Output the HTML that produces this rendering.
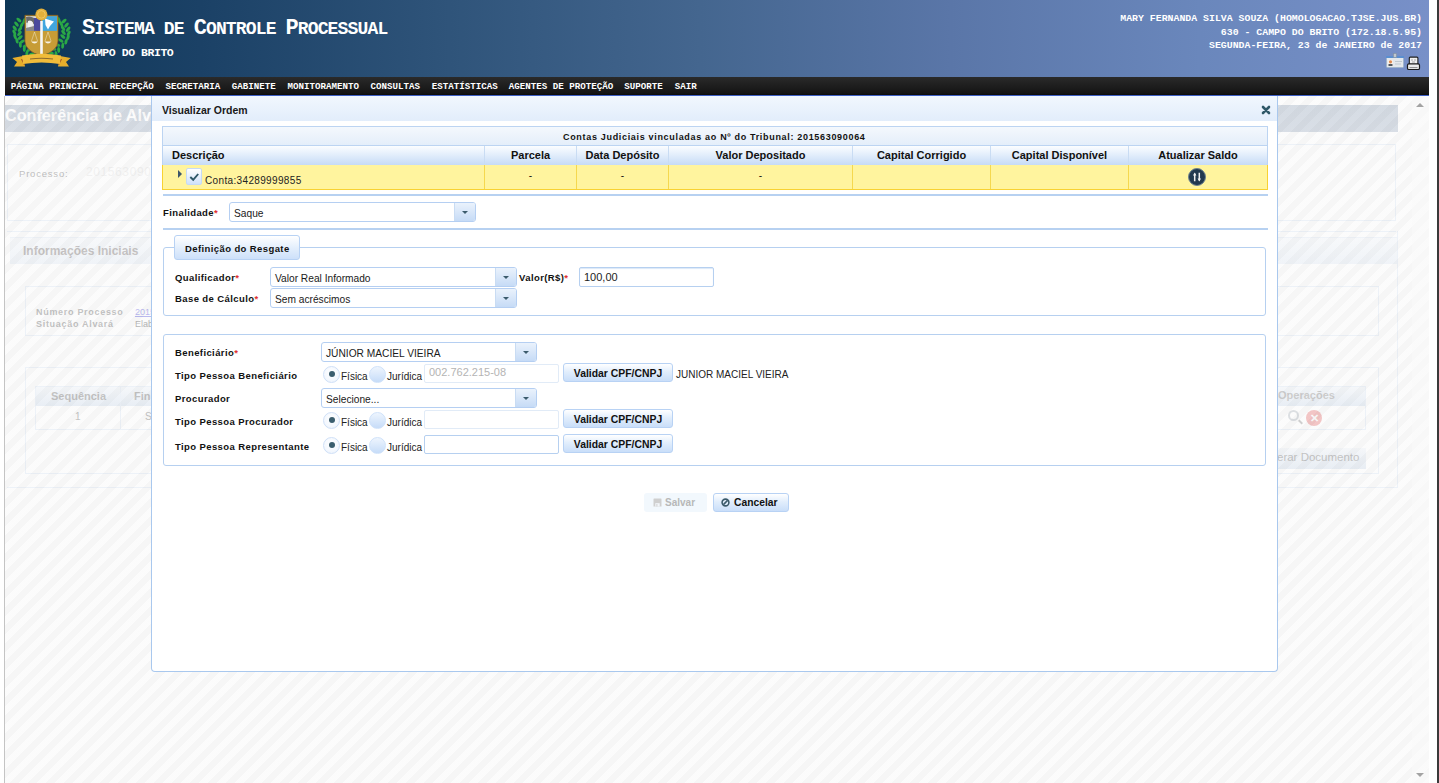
<!DOCTYPE html>
<html><head><meta charset="utf-8">
<style>
*{box-sizing:border-box;margin:0;padding:0}
html,body{width:1439px;height:783px;overflow:hidden;background:#fff;font-family:"Liberation Sans",sans-serif;color:#111}
.a{position:absolute;white-space:pre}
.mono{font-family:"Liberation Mono",monospace;font-weight:bold;color:#fff}
#header{left:5px;top:0;width:1424px;height:77px;background:linear-gradient(90deg,#0d3656 0%,#1b4166 13.7%,#2f547a 31.2%,#44668f 48.8%,#5a76a8 66.4%,#6a87bc 83.9%,#7890c8 100%)}
#nav{left:5px;top:77px;width:1424px;height:19px;background:linear-gradient(#2a2a2a,#141414 90%,#0a0a0a);border-bottom:1px solid #3d5fc4}
#title{left:82px;top:16px;font-size:18px;letter-spacing:-0.85px}
#title b{font-size:22px;letter-spacing:-1px}
#sub{left:83px;top:46px;font-size:11.5px;letter-spacing:-0.45px}
.nv{top:81px;font-size:9.17px}
#userinfo{right:17px;top:12px;font-size:9.87px;text-align:right;line-height:13.6px}
#rborder{left:1437px;top:0;width:2px;height:783px;background:#3a3a3a}
/* background page */
.bgt{color:#bcbcbc}
#overlay{left:5px;top:96px;width:1424px;height:687px;background:repeating-linear-gradient(135deg,rgba(249,249,249,0.6) 0 5.3px,rgba(240,240,240,0.6) 5.3px 12.0px,rgba(249,249,249,0.6) 12.0px 12.7279px)}
/* modal */
#modal{left:151px;top:96px;width:1127px;height:576px;background:#fff;border:1px solid #a9c8ee;border-top:none;border-radius:0 0 4px 4px}
#mtitle{left:0;top:0;width:1125px;height:25px;background:linear-gradient(#f1f7fe,#e2edfb)}
.lbl{font-size:9.5px;font-weight:bold;letter-spacing:0.4px;color:#111}
.req{color:#e03030;font-weight:bold;letter-spacing:0}
.sel{background:#fff;border:1px solid #b5cff2;border-radius:3px;height:20px;font-size:10px;color:#1a1a1a}
.sel span{position:absolute;left:4px;top:5px;font-size:10.2px}
.sel i{position:absolute;right:0;top:0;width:21px;height:18px;border-left:1px solid #c9dcf3;background:linear-gradient(#eaf2fc,#c6dbf6);border-radius:0 2px 2px 0}
.sel i:after{content:"";position:absolute;left:7px;top:8px;border-left:3.5px solid transparent;border-right:3.5px solid transparent;border-top:3.5px solid #3b5b6c}
.inp{background:#fff;border:1px solid #e1ebf7;border-radius:2px;height:19px}
.btn{border:1px solid #b8d2f4;border-radius:3px;background:linear-gradient(#ffffff,#e2eefc 45%,#c9def9);height:19px;font-size:10.4px;font-weight:bold;color:#111;text-align:center}
.radio{width:17px;height:17px;border-radius:50%;border:1px solid #cfe0f7;background:radial-gradient(circle at 50% 40%,#fff 0,#f4f8fe 60%,#e6effb 100%)}
.radio.on:after{content:"";position:absolute;left:4.5px;top:4px;width:6px;height:6px;border-radius:50%;background:#3b5e6e}
.radio.off{background:linear-gradient(#eef5fe,#c6dcf8);border-color:#cfe2fa}
.th{font-size:11px;font-weight:bold;color:#111;text-align:center}
</style></head><body>
<div class="a" style="left:4px;top:96px;width:1px;height:687px;background:#c4c4c4"></div>

<!-- background page -->
<div class="a" style="left:5px;top:105px;width:1393px;height:27px;background:linear-gradient(#a0b0c4,#a8b6c9)"></div>
<div class="a" style="left:5px;top:106px;font-size:16.2px;font-weight:bold;color:#fff">Conferência de Alvará</div>
<div class="a" style="left:7px;top:144px;width:1389px;height:77px;border:1px solid #dbe7f6"></div>
<div class="a" style="left:19px;top:168px;font-size:9.5px;letter-spacing:0.8px;color:#6a6a6a">Processo:</div>

<div class="a" style="left:86px;top:165px;font-size:12px;color:#e4e4e4;letter-spacing:0.6px">201563090064</div>
<div class="a" style="left:7px;top:231px;width:1389px;height:1px;background:#dbe7f6"></div>
<div class="a" style="left:10px;top:237px;width:1388px;height:27px;border-top:1px solid #dfe9f6;background:linear-gradient(#f3f7fc,#e2ebf6)"></div>
<div class="a" style="left:23px;top:244px;font-size:12px;font-weight:bold;color:#7a7474">Informações Iniciais</div>
<div class="a" style="left:25px;top:286px;width:1354px;height:50px;border:1px solid #dbe7f6"></div>
<div class="a" style="left:36px;top:306px;font-size:9px;font-weight:bold;letter-spacing:0.7px;line-height:12px;color:#707070">Número Processo<br>Situação Alvará</div>
<div class="a" style="left:135px;top:306px;font-size:9px;line-height:12px;color:#5a5ae0"><u>2015</u></div>
<div class="a" style="left:135px;top:318px;font-size:9px;line-height:12px;color:#505050">Elab</div>
<div class="a" style="left:25px;top:367px;width:1354px;height:107px;border:1px solid #dbe7f6"></div>
<div class="a" style="left:35px;top:386px;width:1331px;height:44px;border:1px solid #dbe7f6"></div>
<div class="a" style="left:36px;top:387px;width:1329px;height:19px;background:linear-gradient(#f0f5fb,#cfddee)"></div>
<div class="a" style="left:120px;top:386px;width:1px;height:44px;background:#dbe7f6"></div>
<div class="a" style="left:51px;top:390px;font-size:11px;font-weight:bold;color:#707070">Sequência</div>
<div class="a" style="left:75px;top:411px;font-size:10px;color:#707070">1</div><div class="a" style="left:134px;top:390px;font-size:11px;font-weight:bold;color:#707070">Fin</div><div class="a" style="left:145px;top:411px;font-size:10px;color:#707070">S</div>
<div class="a" style="left:1278px;top:389px;font-size:11px;font-weight:bold;color:#8a8a8a">Operações</div>
<div class="a" style="left:1288px;top:410px;width:11px;height:11px;border:2px solid #b0b8c0;border-radius:50%"></div>
<div class="a" style="left:1298px;top:421px;width:5px;height:2px;background:#909090;transform:rotate(45deg)"></div>
<div class="a" style="left:1306px;top:410px;width:16px;height:16px;border-radius:50%;background:#e87878;color:#fff;font-size:11px;font-weight:bold;text-align:center;line-height:16px">✕</div>
<div class="a" style="left:1262px;top:448px;width:104px;height:21px;background:linear-gradient(#eef3f9,#cfdcec)"></div>
<div class="a" style="left:1277px;top:451px;font-size:11.5px;color:#707070">erar Documento</div>
<div class="a" style="left:7px;top:231px;width:1391px;height:257px;border:1px solid #dbe7f6;border-top:none;border-left:none"></div>
<div id="overlay" class="a"></div>
<div id="sbar" class="a" style="left:1412px;top:96px;width:17px;height:687px;background:rgba(250,250,250,0.6)"></div>
<div class="a" style="left:1416px;top:103px;border-left:4px solid transparent;border-right:4px solid transparent;border-bottom:4px solid #a3a3a3"></div>
<div class="a" style="left:1416px;top:773px;border-left:4px solid transparent;border-right:4px solid transparent;border-top:4px solid #a3a3a3"></div>

<!-- header -->
<div id="header" class="a"></div>
<svg class="a" style="left:8px;top:4px" width="70" height="68" viewBox="0 0 70 68">
  <g fill="#2aa846"><ellipse cx="10.9" cy="16.0" rx="1.5" ry="3" transform="rotate(-50 10.9 16.0)"/><ellipse cx="16.1" cy="17.0" rx="1.5" ry="3" transform="rotate(20 16.1 17.0)"/><ellipse cx="8.5" cy="20.1" rx="1.5" ry="3" transform="rotate(-42 8.5 20.1)"/><ellipse cx="13.7" cy="21.1" rx="1.5" ry="3" transform="rotate(28 13.7 21.1)"/><ellipse cx="6.8" cy="24.2" rx="1.5" ry="3" transform="rotate(-35 6.8 24.2)"/><ellipse cx="12.0" cy="25.2" rx="1.5" ry="3" transform="rotate(35 12.0 25.2)"/><ellipse cx="6.3" cy="28.4" rx="1.5" ry="3" transform="rotate(-28 6.3 28.4)"/><ellipse cx="11.5" cy="29.4" rx="1.5" ry="3" transform="rotate(42 11.5 29.4)"/><ellipse cx="7.0" cy="32.5" rx="1.5" ry="3" transform="rotate(-20 7.0 32.5)"/><ellipse cx="12.2" cy="33.5" rx="1.5" ry="3" transform="rotate(50 12.2 33.5)"/><ellipse cx="9.0" cy="36.6" rx="1.5" ry="3" transform="rotate(-12 9.0 36.6)"/><ellipse cx="14.2" cy="37.6" rx="1.5" ry="3" transform="rotate(58 14.2 37.6)"/><ellipse cx="12.3" cy="40.8" rx="1.5" ry="3" transform="rotate(-5 12.3 40.8)"/><ellipse cx="17.5" cy="41.8" rx="1.5" ry="3" transform="rotate(65 17.5 41.8)"/><ellipse cx="16.3" cy="44.9" rx="1.5" ry="3" transform="rotate(2 16.3 44.9)"/><ellipse cx="21.5" cy="45.9" rx="1.5" ry="3" transform="rotate(72 21.5 45.9)"/><ellipse cx="18.9" cy="49.0" rx="1.5" ry="3" transform="rotate(10 18.9 49.0)"/><ellipse cx="24.1" cy="50.0" rx="1.5" ry="3" transform="rotate(80 24.1 50.0)"/><ellipse cx="50.9" cy="16.0" rx="1.5" ry="3" transform="rotate(-20 50.9 16.0)"/><ellipse cx="56.1" cy="17.0" rx="1.5" ry="3" transform="rotate(50 56.1 17.0)"/><ellipse cx="53.3" cy="20.1" rx="1.5" ry="3" transform="rotate(-28 53.3 20.1)"/><ellipse cx="58.5" cy="21.1" rx="1.5" ry="3" transform="rotate(42 58.5 21.1)"/><ellipse cx="55.0" cy="24.2" rx="1.5" ry="3" transform="rotate(-35 55.0 24.2)"/><ellipse cx="60.2" cy="25.2" rx="1.5" ry="3" transform="rotate(35 60.2 25.2)"/><ellipse cx="55.5" cy="28.4" rx="1.5" ry="3" transform="rotate(-42 55.5 28.4)"/><ellipse cx="60.7" cy="29.4" rx="1.5" ry="3" transform="rotate(28 60.7 29.4)"/><ellipse cx="54.8" cy="32.5" rx="1.5" ry="3" transform="rotate(-50 54.8 32.5)"/><ellipse cx="60.0" cy="33.5" rx="1.5" ry="3" transform="rotate(20 60.0 33.5)"/><ellipse cx="52.8" cy="36.6" rx="1.5" ry="3" transform="rotate(-58 52.8 36.6)"/><ellipse cx="58.0" cy="37.6" rx="1.5" ry="3" transform="rotate(12 58.0 37.6)"/><ellipse cx="49.5" cy="40.8" rx="1.5" ry="3" transform="rotate(-65 49.5 40.8)"/><ellipse cx="54.7" cy="41.8" rx="1.5" ry="3" transform="rotate(5 54.7 41.8)"/><ellipse cx="45.5" cy="44.9" rx="1.5" ry="3" transform="rotate(-72 45.5 44.9)"/><ellipse cx="50.7" cy="45.9" rx="1.5" ry="3" transform="rotate(-2 50.7 45.9)"/><ellipse cx="42.9" cy="49.0" rx="1.5" ry="3" transform="rotate(-80 42.9 49.0)"/><ellipse cx="48.1" cy="50.0" rx="1.5" ry="3" transform="rotate(-10 48.1 50.0)"/></g>
  <path d="M16.9 11.3 H50 V37 Q50 47 33.5 52.1 Q16.9 47 16.9 37 Z" fill="#c79c36" stroke="#7a5a26" stroke-width="0.8"/>
  <rect x="18" y="12.2" width="10" height="14.7" fill="#d8d8d8"/>
  <path d="M18 13 Q22 11.5 26 14 L26 20 Q22 17 18.5 19 Z" fill="#6a6a6a"/>
  <path d="M20 17 Q23 15.5 25 18.5 L24.5 24 Q21.5 26 19.5 23 Z" fill="#f2f2f2"/>
  <path d="M18 24 L26 22 L26 26.9 L18 26.9 Z" fill="#8a8a8a"/>
  <rect x="26" y="14" width="7" height="12.9" fill="#4b4a9c"/>
  <rect x="34" y="12.2" width="15" height="14.7" fill="#41a6de"/>
  <path d="M37 14.5 L46 17.5 L42 22 L40 25.5 L37.5 21 Z" fill="#fff"/>
  <rect x="32.2" y="17" width="2.6" height="35" fill="#f6f6f6"/>
  <path d="M26.5 28 L23.5 37 M26.5 28 L29.5 37 M40 28 L37 37 M40 28 L43 37" stroke="#f0e8d0" stroke-width="0.5"/>
  <path d="M23 37.5 Q26.5 41.5 30 37.5 Z M36.5 37.5 Q40 41.5 43.5 37.5 Z" fill="#f6f0e0"/>
  <circle cx="33.4" cy="10.4" r="6" fill="#e3b03a"/>
  <circle cx="33.4" cy="10.4" r="3.8" fill="none" stroke="#f4d070" stroke-width="0.7"/>
  <path d="M4.3 54 L15 52 L17 62.6 L6 62.6 L9 58 Z M62.7 54 L52 52 L50 62.6 L61 62.6 L58 58 Z" fill="#e6ae2c"/>
  <path d="M13 55 L16 61 L19 57 Z M54 55 L51 61 L48 57 Z" fill="#8a3a20"/>
  <path d="M14 51.5 Q33.5 48 53 51.5 L52 60 Q33.5 57 15 60 Z" fill="#f0bc3a"/>
  <path d="M22 55 Q33.5 53.4 45 55" stroke="#8a6a30" stroke-width="1.1" fill="none"/>
</svg>
<div id="title" class="a mono"><b>S</b>ISTEMA DE <b>C</b>ONTROLE <b>P</b>ROCESSUAL</div>
<div id="sub" class="a mono">CAMPO DO BRITO</div>
<div id="userinfo" class="a mono">MARY FERNANDA SILVA SOUZA (HOMOLOGACAO.TJSE.JUS.BR)<br>630 - CAMPO DO BRITO (172.18.5.95)<br>SEGUNDA-FEIRA, 23 de JANEIRO de 2017</div>
<svg class="a" style="left:1385px;top:53px" width="38" height="18" viewBox="0 0 38 18">
  <rect x="1.5" y="3.5" width="17" height="11" rx="1" fill="#e4e8ec" stroke="#9fb4cc" stroke-width="1"/>
  <rect x="1" y="3" width="18" height="2" fill="#5b8fd0"/>
  <rect x="8.5" y="0.5" width="3" height="4" fill="#c0c8d0" stroke="#8090a0" stroke-width="0.6"/>
  <rect x="3" y="7" width="5" height="6" fill="#f6f0ea"/>
  <circle cx="5.5" cy="8.8" r="1.6" fill="#e08a50"/>
  <rect x="3.5" y="11" width="4" height="2" fill="#505860"/>
  <path d="M10 8.5 H17 M10 11 H16" stroke="#b8c0c8" stroke-width="0.8"/>
  <rect x="24.3" y="4.1" width="8.6" height="7.5" rx="1" fill="#f0f0f0" stroke="#1e1e1e" stroke-width="1.1"/>
  <rect x="22.5" y="10.9" width="12" height="5.6" rx="1.3" fill="#ececec" stroke="#1a1a1a" stroke-width="1.2"/>
  <path d="M24.5 14.6 H32.5" stroke="#707070" stroke-width="0.8"/>
  <path d="M26 7 H28 M29 7 H31 M27 9 H30" stroke="#8a8a8a" stroke-width="0.7"/>
</svg>
<div id="nav" class="a"></div>
<div class="a mono nv" style="left:10.7px">PÁGINA PRINCIPAL</div><div class="a mono nv" style="left:109.7px">RECEPÇÃO</div><div class="a mono nv" style="left:165.4px">SECRETARIA</div><div class="a mono nv" style="left:231.7px">GABINETE</div><div class="a mono nv" style="left:287.5px">MONITORAMENTO</div><div class="a mono nv" style="left:370.5px">CONSULTAS</div><div class="a mono nv" style="left:431.7px">ESTATÍSTICAS</div><div class="a mono nv" style="left:508.8px">AGENTES DE PROTEÇÃO</div><div class="a mono nv" style="left:624.2px">SUPORTE</div><div class="a mono nv" style="left:674.7px">SAIR</div>

<!-- modal -->
<div id="modal" class="a">
  <div id="mtitle" class="a"></div>
</div>
<div class="a" style="left:162px;top:104px;font-size:10.5px;font-weight:bold;color:#1a1a1a">Visualizar Ordem</div>
<svg class="a" style="left:1261px;top:105px" width="10" height="10" viewBox="0 0 10 10"><path d="M2 2 L8 8 M8 2 L2 8" stroke="#2f5868" stroke-width="2.6" stroke-linecap="round"/></svg>

<!-- table -->
<div class="a" style="left:162px;top:126px;width:1106px;height:20px;border:1px solid #bcd4f2;background:linear-gradient(#f4f8fd,#e4eefa)"></div>
<div class="a" style="left:563px;top:132px;font-size:9px;font-weight:bold;letter-spacing:0.68px;color:#111">Contas Judiciais vinculadas ao Nº do Tribunal: 201563090064</div>
<div class="a" style="left:162px;top:146px;width:1106px;height:19px;background:linear-gradient(#fbfdff 0%,#e6f0fc 40%,#c6dbf6 100%);border-left:1px solid #bcd4f2;border-right:1px solid #bcd4f2"></div>
<div class="a" style="left:162px;top:165px;width:1106px;height:25px;background:#fff49e;border:1px solid #f8d232;border-top:none"></div>
<!-- col borders -->
<div class="a" style="left:484px;top:146px;width:1px;height:19px;background:#c9dcf3"></div>
<div class="a" style="left:576px;top:146px;width:1px;height:19px;background:#c9dcf3"></div>
<div class="a" style="left:668px;top:146px;width:1px;height:19px;background:#c9dcf3"></div>
<div class="a" style="left:852px;top:146px;width:1px;height:19px;background:#c9dcf3"></div>
<div class="a" style="left:990px;top:146px;width:1px;height:19px;background:#c9dcf3"></div>
<div class="a" style="left:1128px;top:146px;width:1px;height:19px;background:#c9dcf3"></div>
<div class="a" style="left:484px;top:165px;width:1px;height:24px;background:#f5d84e"></div>
<div class="a" style="left:576px;top:165px;width:1px;height:24px;background:#f5d84e"></div>
<div class="a" style="left:668px;top:165px;width:1px;height:24px;background:#f5d84e"></div>
<div class="a" style="left:852px;top:165px;width:1px;height:24px;background:#f5d84e"></div>
<div class="a" style="left:990px;top:165px;width:1px;height:24px;background:#f5d84e"></div>
<div class="a" style="left:1128px;top:165px;width:1px;height:24px;background:#f5d84e"></div>
<div class="a th" style="left:172px;top:149px">Descrição</div>
<div class="a th" style="left:485px;top:149px;width:91px">Parcela</div>
<div class="a th" style="left:577px;top:149px;width:91px">Data Depósito</div>
<div class="a th" style="left:669px;top:149px;width:183px">Valor Depositado</div>
<div class="a th" style="left:853px;top:149px;width:137px">Capital Corrigido</div>
<div class="a th" style="left:991px;top:149px;width:137px">Capital Disponível</div>
<div class="a th" style="left:1129px;top:149px;width:138px">Atualizar Saldo</div>
<div class="a" style="left:178px;top:170px;border-top:4px solid transparent;border-bottom:4px solid transparent;border-left:4px solid #3d5668"></div>
<div class="a" style="left:186px;top:168px;width:16px;height:17px;border:1px solid #c6daf5;border-radius:2px;background:linear-gradient(#ffffff,#cfe1fa)"></div>
<svg class="a" style="left:187px;top:169px" width="14" height="14" viewBox="0 0 14 14"><path d="M3.3 8 L6.2 10.8 L11.2 5" stroke="#2f5868" stroke-width="1.9" fill="none"/></svg>
<div class="a" style="left:205px;top:175px;font-size:10px;letter-spacing:0.35px;color:#222">Conta:34289999855</div>
<div class="a" style="left:485px;top:170px;width:91px;text-align:center;font-size:10px">-</div>
<div class="a" style="left:577px;top:170px;width:91px;text-align:center;font-size:10px">-</div>
<div class="a" style="left:669px;top:170px;width:183px;text-align:center;font-size:10px">-</div>
<div class="a" style="left:1188px;top:168px;width:18px;height:18px;border-radius:50%;background:#22394f;border:1px solid #6d8290"></div>
<svg class="a" style="left:1188px;top:168px" width="18" height="18" viewBox="0 0 18 18"><path d="M6.7 13.2 V5.5 M11.3 4.8 V12.5" stroke="#f0f0f0" stroke-width="1.5" fill="none"/><path d="M5 7.6 L6.7 4.6 L8.4 7.6 Z M9.6 10.4 L11.3 13.4 L13 10.4 Z" fill="#f0f0f0"/></svg>

<div class="a" style="left:163px;top:194px;width:1105px;height:2px;background:#b7d1f1"></div>
<div class="a lbl" style="left:163px;top:207px">Finalidade<span class="req">*</span></div>
<div class="a sel" style="left:229px;top:202px;width:247px"><span>Saque</span><i></i></div>
<div class="a" style="left:163px;top:228px;width:1105px;height:2px;background:#b7d1f1"></div>

<!-- fieldset 1 -->
<div class="a" style="left:163px;top:247px;width:1103px;height:69px;border:1px solid #b6d0f0;border-radius:3px"></div>
<div class="a" style="left:174px;top:235px;width:126px;height:25px;border:1px solid #b8d2f4;border-radius:3px;background:linear-gradient(#ffffff,#e4effc 50%,#cde0fa)"></div>
<div class="a lbl" style="left:185px;top:243px">Definição do Resgate</div>
<div class="a lbl" style="left:175px;top:272px">Qualificador<span class="req">*</span></div>
<div class="a sel" style="left:270px;top:267px;width:247px"><span>Valor Real Informado</span><i></i></div>
<div class="a lbl" style="left:519px;top:272px">Valor(R$)<span class="req">*</span></div>
<div class="a inp" style="left:579px;top:267px;width:135px;height:20px;border-color:#b6d0f0;box-shadow:inset 0 1px 1px #dbe8f8"></div>
<div class="a" style="left:584px;top:271px;font-size:11px;color:#222">100,00</div>
<div class="a lbl" style="left:175px;top:293px">Base de Cálculo<span class="req">*</span></div>
<div class="a sel" style="left:270px;top:288px;width:247px"><span>Sem acréscimos</span><i></i></div>

<!-- fieldset 2 -->
<div class="a" style="left:163px;top:334px;width:1103px;height:132px;border:1px solid #b6d0f0;border-radius:3px"></div>
<div class="a lbl" style="left:175px;top:347px">Beneficiário<span class="req">*</span></div>
<div class="a sel" style="left:321px;top:342px;width:216px"><span>JÚNIOR MACIEL VIEIRA</span><i></i></div>
<div class="a lbl" style="left:175px;top:370px">Tipo Pessoa Beneficiário</div>
<div class="a radio on" style="left:323px;top:366px"></div>
<div class="a" style="left:341px;top:371px;font-size:10px;color:#222">Física</div>
<div class="a radio off" style="left:369px;top:366px"></div>
<div class="a" style="left:387px;top:371px;font-size:10px;color:#222">Jurídica</div>
<div class="a inp" style="left:424px;top:364px;width:135px"></div>
<div class="a" style="left:429px;top:366px;font-size:11px;color:#b4b4b4">002.762.215-08</div>
<div class="a btn" style="left:563px;top:363px;width:110px"><span style="position:relative;top:4px">Validar CPF/CNPJ</span></div>
<div class="a" style="left:676px;top:369px;font-size:10px;color:#222">JUNIOR MACIEL VIEIRA</div>

<div class="a lbl" style="left:175px;top:393px">Procurador</div>
<div class="a sel" style="left:321px;top:388px;width:216px"><span>Selecione...</span><i></i></div>
<div class="a lbl" style="left:175px;top:416px">Tipo Pessoa Procurador</div>
<div class="a radio on" style="left:323px;top:412px"></div>
<div class="a" style="left:341px;top:417px;font-size:10px;color:#222">Física</div>
<div class="a radio off" style="left:369px;top:412px"></div>
<div class="a" style="left:387px;top:417px;font-size:10px;color:#222">Jurídica</div>
<div class="a inp" style="left:424px;top:410px;width:135px"></div>
<div class="a btn" style="left:563px;top:409px;width:110px"><span style="position:relative;top:4px">Validar CPF/CNPJ</span></div>

<div class="a lbl" style="left:175px;top:441px">Tipo Pessoa Representante</div>
<div class="a radio on" style="left:323px;top:437px"></div>
<div class="a" style="left:341px;top:442px;font-size:10px;color:#222">Física</div>
<div class="a radio off" style="left:369px;top:437px"></div>
<div class="a" style="left:387px;top:442px;font-size:10px;color:#222">Jurídica</div>
<div class="a inp" style="left:424px;top:435px;width:135px;border-color:#b6d0f0"></div>
<div class="a btn" style="left:563px;top:434px;width:110px"><span style="position:relative;top:4px">Validar CPF/CNPJ</span></div>

<!-- action buttons -->
<div class="a" style="left:644px;top:493px;width:63px;height:19px;border-radius:3px;background:#f2f8fd"></div>
<svg class="a" style="left:653px;top:498px" width="9" height="9" viewBox="0 0 9 9"><path d="M0.5 1 Q0.5 0.5 1 0.5 H8 Q8.5 0.5 8.5 1 V8.5 H0.5 Z" fill="#cfcfcf"/><rect x="2.3" y="5.2" width="4.4" height="3.3" fill="#f2f6fa"/><rect x="3.4" y="6" width="1" height="2.5" fill="#cfcfcf"/></svg>
<div class="a" style="left:665px;top:497px;font-size:10px;font-weight:bold;color:#b8b8b8">Salvar</div>
<div class="a btn" style="left:713px;top:493px;width:76px"></div>
<svg class="a" style="left:721px;top:498px" width="9" height="9" viewBox="0 0 9 9"><circle cx="4.5" cy="4.5" r="3.4" fill="none" stroke="#3b5a6a" stroke-width="1.6"/><path d="M2.4 6.6 L6.6 2.4" stroke="#3b5a6a" stroke-width="1.5"/></svg>
<div class="a" style="left:734px;top:497px;font-size:10.3px;font-weight:bold;color:#111">Cancelar</div>

<div id="rborder" class="a"></div>
</body></html>
